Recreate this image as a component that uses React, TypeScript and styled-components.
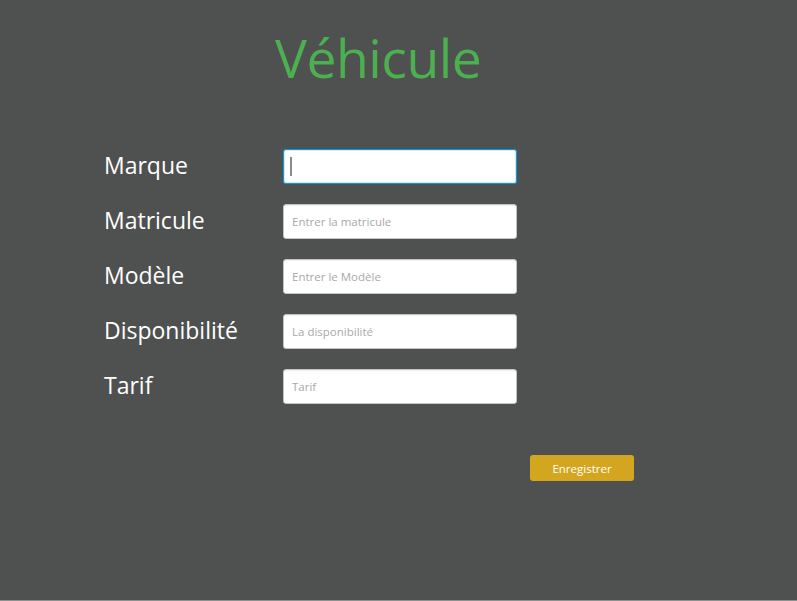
import React from 'react'
import styled, { createGlobalStyle } from 'styled-components'

const GlobalStyle = createGlobalStyle`
  html, body {
    margin: 0;
    padding: 0;
    background-color: #4f5150;
  }
  body {
    font-family: 'Open Sans', 'Noto Sans', sans-serif;
  }
`

const Screen = styled.main`
  width: 797px;
  height: 601px;
  box-sizing: border-box;
  background-color: #4f5150;
  border-bottom: 1px solid #8e8f8e;
  padding-top: 18px;
  overflow: hidden;
`

const Title = styled.h1`
  margin: 0 0 0 275px;
  font-size: 53.5px;
  font-weight: 400;
  line-height: 80px;
  color: #4caf50;
  letter-spacing: -0.5px;
`

const Form = styled.form`
  margin: 51px 0 0 104px;
  display: grid;
  grid-template-columns: 179px 234px;
  grid-auto-rows: 35px;
  row-gap: 20px;
`

const Label = styled.label`
  display: flex;
  align-items: center;
  padding-bottom: 3px;
  color: #ffffff;
  font-size: 23px;
  letter-spacing: 0;
`

const Field = styled.div`
  position: relative;
  display: flex;
`

const Input = styled.input<{ $focused?: boolean }>`
  width: 100%;
  height: 35px;
  box-sizing: border-box;
  margin: 0;
  padding: 0 8px;
  border-radius: 3px;
  background-color: #ffffff;
  font-family: 'Open Sans', 'Noto Sans', sans-serif;
  font-size: 11.5px;
  color: #333;
  outline: none;
  caret-color: transparent;
  border: 1px solid ${({ $focused }) => ($focused ? '#0a9ad6' : '#c4c4c4')};
  box-shadow: ${({ $focused }) =>
    $focused ? 'inset 0 0 0 1px #d6ecf6' : 'inset 0 1px 1px rgba(0, 0, 0, 0.06)'};

  &::placeholder {
    color: #a9a9a9;
  }
`

const Caret = styled.span`
  position: absolute;
  left: 7px;
  top: 8px;
  width: 2px;
  height: 19px;
  background-color: #8a8a8a;
`

const Actions = styled.div`
  margin: 51px 0 0 530px;
`

const SaveButton = styled.button`
  width: 104px;
  height: 26px;
  border: none;
  border-radius: 3px;
  background-color: #d4a61f;
  color: #ffffff;
  font-family: 'Open Sans', 'Noto Sans', sans-serif;
  font-size: 11.5px;
  padding: 0;
  cursor: pointer;
`

const fields = [
  { label: 'Marque', placeholder: '', focused: true },
  { label: 'Matricule', placeholder: 'Entrer la matricule' },
  { label: 'Modèle', placeholder: 'Entrer le Modèle' },
  { label: 'Disponibilité', placeholder: 'La disponibilité' },
  { label: 'Tarif', placeholder: 'Tarif' },
]

const App = () => {
  return (
    <>
      <GlobalStyle />
      <Screen>
        <Title>Véhicule</Title>
        <Form onSubmit={(e) => e.preventDefault()}>
          {fields.map((f) => (
            <React.Fragment key={f.label}>
              <Label>{f.label}</Label>
              <Field>
                <Input $focused={f.focused} placeholder={f.placeholder} />
                {f.focused && <Caret />}
              </Field>
            </React.Fragment>
          ))}
        </Form>
        <Actions>
          <SaveButton type="button">Enregistrer</SaveButton>
        </Actions>
      </Screen>
    </>
  )
}

export default App
